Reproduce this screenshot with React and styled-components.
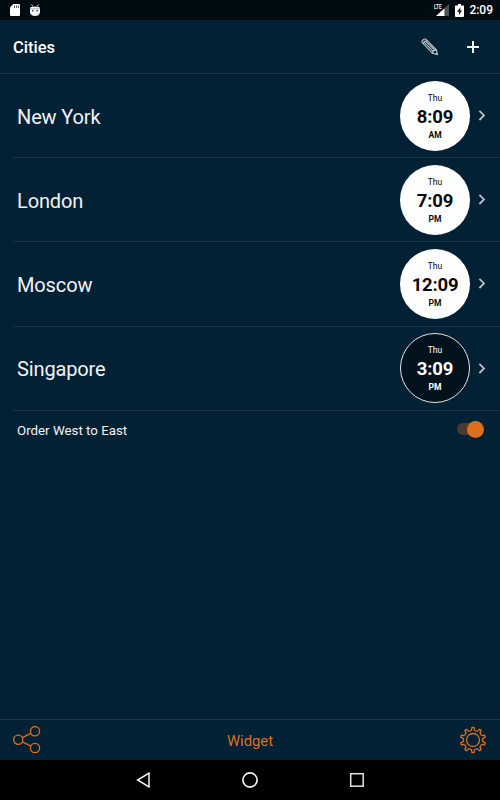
import { useState } from "react";
import styled, { createGlobalStyle } from "styled-components";

const initialCities = [
    { id: 1, name: "New York", day: "Thu", time: "8:09", period: "AM", night: false },
    { id: 2, name: "London", day: "Thu", time: "7:09", period: "PM", night: false },
    { id: 3, name: "Moscow", day: "Thu", time: "12:09", period: "PM", night: false },
    { id: 4, name: "Singapore", day: "Thu", time: "3:09", period: "PM", night: true },
];

function gearPath(teeth, outer, inner, center) {
    const step = (Math.PI * 2) / teeth;
    const point = (radius, angle) =>
        `${(center + radius * Math.sin(angle)).toFixed(2)} ${(center - radius * Math.cos(angle)).toFixed(2)}`;
    let d = "";
    for (let i = 0; i < teeth; i++) {
        const a = i * step;
        d += `${i === 0 ? "M" : "L"}${point(outer, a - step * 0.13)} L${point(outer, a + step * 0.13)} `;
        d += `L${point(inner + 0.5, a + step * 0.24)} Q${point(inner - 0.5, a + step * 0.5)} ${point(inner + 0.5, a + step * 0.76)} `;
    }
    return d + "Z";
}

export default function App() {
    const [westToEast, setWestToEast] = useState(true);

    return (
        <>
            <GlobalStyle />
            <Screen>
                <StatusBar>
                    <StatusGroup>
                        <svg width="10" height="12" viewBox="0 0 10 12">
                            <path d="M3.2 0H9q1 0 1 1v10q0 1-1 1H1q-1 0-1-1V3.4z" fill="#fff" />
                            <path d="M4.5 1.6v2.2M6.500 1.6v2.2M8.400 1.6v2.2" stroke="#444" strokeWidth="1" />
                        </svg>
                        <svg width="12" height="13" viewBox="0 0 12 13">
                            <path d="M2.6 .5l1.2 2M9.4 .5l-1.2 2" stroke="#ddd" strokeWidth="1" />
                            <path d="M1 4.200Q1 2.500 6 2.500t5 1.700V8.500Q10 12 6 12T1 8.500z" fill="#f5f5f5" />
                            <path d="M1 4.800h10" stroke="#999" strokeWidth=".7" />
                            <circle cx="3.800" cy="6.800" r=".8" fill="#222" />
                            <circle cx="8.200" cy="6.800" r=".8" fill="#222" />
                        </svg>
                    </StatusGroup>
                    <StatusGroup $end>
                        <Signal>
                            <span>LTE</span>
                            <svg width="13" height="12" viewBox="0 0 13 12">
                                <path d="M13 0v12H8.500V4.200z" fill="#49545a" />
                                <path d="M8.500 4.200V12H0z" fill="#fff" />
                            </svg>
                        </Signal>
                        <svg width="9" height="13" viewBox="0 0 9 13">
                            <path d="M3 0h3v1.500h2.500q.5 0 .5.5v10q0 1-1 1H1q-1 0-1-1V2q0-.5.5-.5H3z" fill="#fff" />
                            <path d="M5.400 3.300L2 7.700h2v3.200L7 6.600H5.200z" fill="#111" />
                        </svg>
                        <Clock>2:09</Clock>
                    </StatusGroup>
                </StatusBar>

                <Header>
                    <h1>Cities</h1>
                    <HeaderActions>
                        <IconButton aria-label="Edit">
                            <svg width="18" height="18" viewBox="0 0 18 18" fill="none" stroke="#c3c8cb" strokeWidth="1.100">
                                <path d="M.9 4.300Q.6 3.300 2 2t2.800-.8L15.400 11.800l1 4.700-4.900-1.200z" />
                                <path d="M2.200 5.800Q2.500 3 6.200 2.700M3.300 4.400L13 14.200M5 3.300l9.500 9.600M11.500 15.300q0-3 3.900-3.500" />
                                <path d="M15 15.200l1.400 1.300" strokeWidth="1.800" />
                            </svg>
                        </IconButton>
                        <IconButton aria-label="Add">
                            <svg width="12" height="12" viewBox="0 0 12 12" stroke="#f2f2f2" strokeWidth="2">
                                <path d="M6 0v12M0 6h12" />
                            </svg>
                        </IconButton>
                    </HeaderActions>
                </Header>

                <CityList>
                    {initialCities.map(city => (
                        <CityRow key={city.id}>
                            <CityName>{city.name}</CityName>
                            <ClockFace $night={city.night}>
                                <Day>{city.day}</Day>
                                <Time>{city.time}</Time>
                                <Period>{city.period}</Period>
                            </ClockFace>
                            <svg width="8" height="11" viewBox="0 0 8 11" fill="none" stroke="#bdc1c4" strokeWidth="1.800">
                                <path d="M1.400 .8l4.600 4.600L1.400 10" />
                            </svg>
                        </CityRow>
                    ))}
                </CityList>

                <OrderRow>
                    <p>Order West to East</p>
                    <Switch
                        role="switch"
                        aria-checked={westToEast}
                        aria-label="Order West to East"
                        onClick={() => setWestToEast(!westToEast)}
                    >
                        <Track />
                        <Thumb $on={westToEast} />
                    </Switch>
                </OrderRow>

                <BottomBar>
                    <IconButton aria-label="Share">
                        <svg width="28" height="28" viewBox="0 0 28 28" fill="none" stroke="#dc6f20" strokeWidth="1.300">
                            <circle cx="5.200" cy="13.700" r="4.600" />
                            <circle cx="22" cy="5.200" r="4.600" />
                            <circle cx="22" cy="22" r="4.600" />
                            <path d="M9.300 11.700l8.500-4.300M9.300 15.800l8.500 4.200" />
                        </svg>
                    </IconButton>
                    <WidgetButton>Widget</WidgetButton>
                    <IconButton aria-label="Settings">
                        <svg width="28" height="28" viewBox="0 0 28 28" fill="none" stroke="#dc6f20" strokeWidth="1.300" strokeLinejoin="round">
                            <path d={gearPath(10, 12.6, 9.5, 14)} />
                            <circle cx="14" cy="14" r="6.500" />
                        </svg>
                    </IconButton>
                </BottomBar>

                <NavBar>
                    <svg width="16" height="18" viewBox="0 0 16 18" fill="none" stroke="#f2f2f2" strokeWidth="1.500">
                        <path d="M14 2v14L2.600 9z" />
                    </svg>
                    <svg width="18" height="18" viewBox="0 0 18 18" fill="none" stroke="#f2f2f2" strokeWidth="1.700">
                        <circle cx="9" cy="9" r="7.100" />
                    </svg>
                    <svg width="16" height="16" viewBox="0 0 16 16" fill="none" stroke="#e2e2de" strokeWidth="1.500">
                        <rect x="1.700" y="1.700" width="12.500" height="12.500" />
                    </svg>
                </NavBar>
            </Screen>
        </>
    )
}

const GlobalStyle = createGlobalStyle`
*{
    box-sizing: border-box;
}
body{
    margin: 0;
    background-color: #032135;
    font-family: Roboto, sans-serif;
}
h1, p{
    margin: 0;
}
button{
    padding: 0;
    border: none;
    background: none;
    font-family: inherit;
    cursor: pointer;
}
svg{
    display: block;
    flex-shrink: 0;
}
`
const Screen = styled.div`
width: 500px;
height: 800px;
display: flex;
flex-direction: column;
background-color: #032135;
color: #f2f2f2;
overflow: hidden;
`
const StatusBar = styled.div`
height: 20px;
padding: 0 7px 0 10px;
display: flex;
justify-content: space-between;
align-items: center;
background-color: #010b12;
`
const StatusGroup = styled.div`
height: 20px;
display: flex;
align-items: center;
gap: ${props => props.$end ? "6px" : "9px"};
`
const Signal = styled.div`
display: flex;
align-items: flex-start;
span{
    width: 2px;
    font-size: 8px;
    line-height: 6px;
    font-weight: 500;
    white-space: nowrap;
    transform: scaleX(0.6);
    transform-origin: left;
    color: #fff;
}
`
const Clock = styled.div`
margin-left: -1px;
font-size: 12px;
line-height: 21px;
font-weight: 500;
color: #fff;
`
const Header = styled.div`
height: 54px;
padding: 1px 21px 0 13px;
display: flex;
justify-content: space-between;
align-items: center;
border-bottom: 1px solid #1b3648;
h1{
    padding-top: 2px;
    font-size: 16.5px;
    line-height: 22px;
    font-weight: 500;
    color: #fff;
}
`
const HeaderActions = styled.div`
display: flex;
align-items: center;
gap: 28px;
`
const IconButton = styled.button`
display: flex;
`
const CityList = styled.div`
padding-left: 13px;
`
const CityRow = styled.div`
height: 84.2px;
padding: 0 14.5px 0 4px;
display: flex;
align-items: center;
border-bottom: 1px solid #1b3648;
`
const CityName = styled.p`
flex: 1;
padding-top: 2px;
font-size: 20px;
line-height: 26px;
font-weight: 400;
letter-spacing: -0.13px;
`
const ClockFace = styled.div`
width: 70px;
height: 70px;
margin-right: 7.5px;
padding-top: ${props => props.$night ? "11px" : "12px"};
display: flex;
flex-direction: column;
align-items: center;
border-radius: 50%;
border: ${props => props.$night ? "1px solid #e8e4e0" : "none"};
background-color: ${props => props.$night ? "#02121d" : "#fff"};
color: ${props => props.$night ? "#fff" : "#0a0a0a"};
`
const Day = styled.span`
font-size: 8.5px;
line-height: 11px;
`
const Time = styled.span`
font-size: 18.5px;
line-height: 26px;
font-weight: 700;
letter-spacing: -0.2px;
`
const Period = styled.span`
font-size: 8.5px;
line-height: 10px;
font-weight: 700;
`
const OrderRow = styled.div`
flex: 1;
padding: 10px 16px 0 17px;
display: flex;
justify-content: space-between;
align-items: flex-start;
p{
    font-size: 13.3px;
    line-height: 20px;
}
`
const Switch = styled.button`
width: 27px;
height: 17px;
display: grid;
align-items: center;
`
const Track = styled.span`
grid-area: 1 / 1;
width: 24px;
height: 12px;
border-radius: 6px;
background-color: #4b3a32;
`
const Thumb = styled.span`
grid-area: 1 / 1;
justify-self: ${props => props.$on ? "end" : "start"};
width: 17px;
height: 17px;
border-radius: 50%;
background-color: ${props => props.$on ? "#dc6f1e" : "#b9b9b9"};
`
const BottomBar = styled.div`
height: 41px;
padding: 0 13px;
display: flex;
justify-content: space-between;
align-items: center;
border-top: 1px solid #1b3648;
`
const WidgetButton = styled.button`
padding-top: 1px;
font-size: 14.8px;
line-height: 20px;
color: #dc6f20;
`
const NavBar = styled.div`
height: 40px;
padding: 0 135px;
display: flex;
justify-content: space-between;
align-items: center;
background-color: #000;
`
